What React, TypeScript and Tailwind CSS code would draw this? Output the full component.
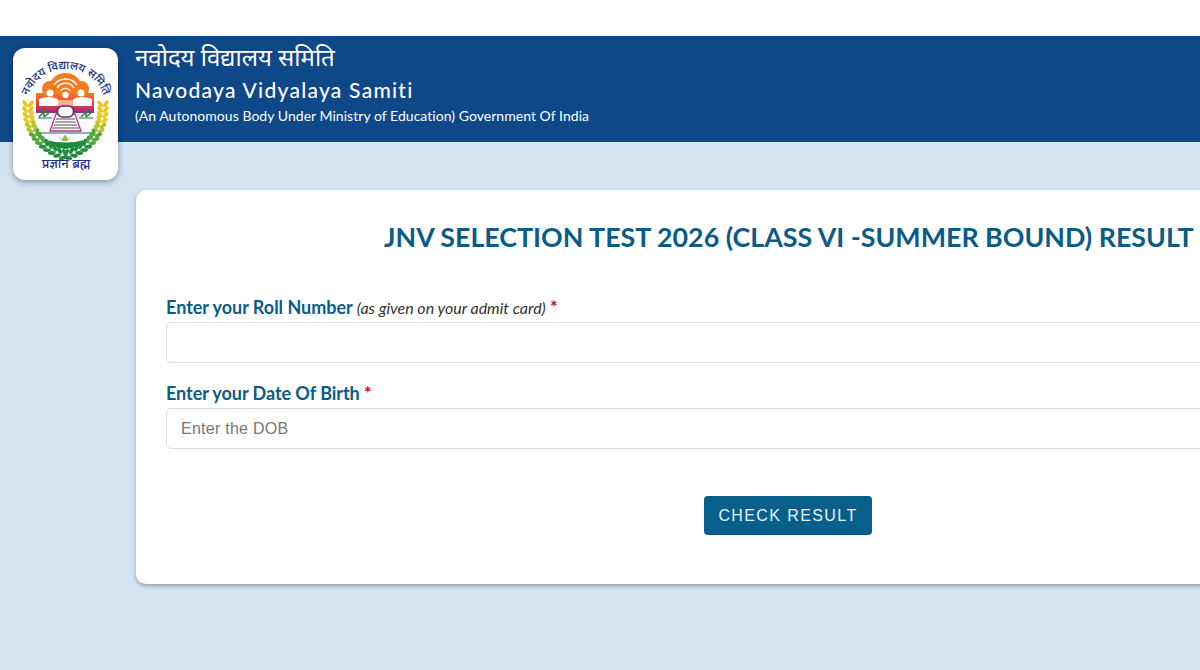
import React from 'react';

// wheat sprigs of the wreath, laid along one curve and mirrored for the right side
const wreathLeaves = Array.from({ length: 14 }, (_, i) => {
    const t = i / 13;
    const x = (1 - t) * (1 - t) * 15 + 2 * t * (1 - t) * 13 + t * t * 50;
    const y = (1 - t) * (1 - t) * 55 + 2 * t * (1 - t) * 93 + t * t * 107;
    const dx = 2 * (1 - t) * (13 - 15) + 2 * t * (50 - 13);
    const dy = 2 * (1 - t) * (93 - 55) + 2 * t * (107 - 93);
    const angle = (Math.atan2(dy, dx) * 180) / Math.PI;
    const color = i < 4 ? '#e8c81f' : i < 6 ? '#b6c42c' : i < 9 ? '#4fa83a' : '#1f8f3c';
    return { x, y, angle, color };
});

const Wreath = () => (
    <g>
        {wreathLeaves.map((l, i) => (
            <g key={i} transform={`translate(${l.x} ${l.y}) rotate(${l.angle})`}>
                <ellipse cx="-1" cy="-2.8" rx="3.9" ry="1.9" transform="rotate(35)" fill={l.color} />
                <ellipse cx="-1" cy="2.8" rx="3.9" ry="1.9" transform="rotate(-35)" fill={l.color} />
            </g>
        ))}
    </g>
);

const Logo = () => (
    <svg viewBox="0 0 105 132" className="w-[105px] h-[132px]">
        <defs>
            <linearGradient id="jnvBand" x1="0" y1="0" x2="0" y2="1">
                <stop offset="0" stopColor="#f47b20" />
                <stop offset="0.5" stopColor="#e9472e" />
                <stop offset="1" stopColor="#97278f" />
            </linearGradient>
            <path id="jnvArc" d="M13 61 A40 40 0 0 1 93 61" />
        </defs>
        <text fontSize="11.5" fill="#1d3280" fontFamily="'Noto Sans Devanagari', 'Noto Sans', sans-serif" fontWeight="500">
            <textPath href="#jnvArc" startOffset="50%" textAnchor="middle">नवोदय विद्यालय समिति</textPath>
        </text>
        {/* dome and the three heads */}
        <circle cx="52.5" cy="42" r="17" fill="#f47b20" />
        <circle cx="37" cy="41" r="8" fill="#f47b20" />
        <circle cx="68" cy="41" r="8" fill="#f47b20" />
        <path d="M41 37 A14 14 0 0 1 64 37 M44 40 A10 10 0 0 1 61 40 M47.5 43 A6 6 0 0 1 57.5 43" fill="none" stroke="#fff" strokeWidth="1.3" />
        <rect x="23" y="45" width="58" height="20" fill="url(#jnvBand)" />
        <circle cx="37" cy="45" r="3.6" fill="#fff" />
        <circle cx="52.5" cy="47" r="3.2" fill="#fff" />
        <circle cx="68" cy="45" r="3.6" fill="#fff" />
        <path d="M26 58 V51 Q36 47 45 51 V58 Z" fill="#fff" />
        <path d="M79 58 V51 Q69 47 60 51 V58 Z" fill="#fff" />
        <path d="M45 52 H60 V58 H45 Z" fill="#f2b48c" />
        {/* open book with the lamp on top */}
        <path d="M37 83 L43 66 H62 L68 83 Z" fill="#fff" stroke="#b2308f" strokeWidth="1.3" />
        <rect x="44.5" y="58" width="16" height="11" rx="5" fill="#fff" stroke="#5a2a85" strokeWidth="1.6" />
        <path d="M43 71 H62 M42 74 H63 M41 77 H64 M39 80 H66" stroke="#3b3b3b" strokeWidth="0.9" />
        {/* ground lines and grass */}
        <path d="M25 70 H39 M66 70 H80 M25 85 H80" stroke="#2b5a6e" strokeWidth="1" />
        <path d="M26 69 L31 64 M31 69 L31 62 M31 69 L37 64 M68 69 L73 64 M73 69 L73 62 M73 69 L79 64" stroke="#2e8b3d" strokeWidth="1.6" />
        {/* lotus base */}
        <path d="M33 92 Q52 97 72 92 Q66 100 52 101 Q39 100 33 92 Z" fill="#1c8a3a" />
        <path d="M52 87 L49 92 L52 93 L55 92 Z M46 89 L50 93 M58 89 L54 93" fill="#8fbd3a" stroke="#8fbd3a" strokeWidth="0.8" />
        <Wreath />
        <g transform="matrix(-1 0 0 1 105 0)">
            <Wreath />
        </g>
        <text x="53" y="120" textAnchor="middle" fontSize="13" fill="#1d3280" fontFamily="'Noto Sans Devanagari', 'Noto Sans', sans-serif" fontWeight="500">
            प्रज्ञानं ब्रह्म
        </text>
    </svg>
);

const App: React.FC = () => {
    return (
        <div className="h-[670px] w-[1200px] overflow-hidden bg-[#d4e4f3] font-['Lato',sans-serif]">
            <div className="h-9 bg-white" />
            <header className="h-[106px] bg-[#0e4889] pl-[135px] pt-[8px] text-white">
                <div className="font-['Noto_Sans_Devanagari','Noto_Sans',sans-serif] text-[24px] leading-[32px]">नवोदय विद्यालय समिति</div>
                <div className="text-[21px] leading-[28px] font-medium tracking-[1.25px]">Navodaya Vidyalaya Samiti</div>
                <div className="text-[14px] leading-[24px] tracking-[0.04px]">(An Autonomous Body Under Ministry of Education) Government Of India</div>
            </header>
            <div className="absolute left-[13px] top-[48px] flex h-[132px] w-[105px] items-center justify-center rounded-[12px] bg-white shadow-[0_2px_6px_rgba(0,0,0,0.35)]">
                <Logo />
            </div>
            <main className="ml-[136px] mt-[48px] h-[394px] w-[1100px] rounded-l-[10px] bg-white pl-[30px] pt-[27px] shadow-[0_2px_4px_rgba(0,0,0,0.3)]">
                <h1 className="pl-[218px] text-[26.8px] leading-[40px] font-bold whitespace-nowrap text-[#0b5b87]">JNV SELECTION TEST 2026 (CLASS VI -SUMMER BOUND) RESULT</h1>
                <form className="mt-[38px]">
                    <label className="block h-[24px] text-[18px] leading-[24px] font-bold tracking-[-0.02px] text-[#0b5b87]">
                        Enter your Roll Number <em className="text-[16px] font-normal text-[#333]">(as given on your admit card)</em> <span className="text-[18px] text-[#e3001b]">*</span>
                    </label>
                    <input className="mt-[3px] block h-[41px] w-full rounded-[5px] border border-[#dcdcdc] bg-white px-[14px]" />
                    <label className="mt-[18px] block h-[24px] text-[18px] leading-[24px] font-bold tracking-[-0.05px] text-[#0b5b87]">
                        Enter your Date Of Birth <span className="text-[18px] text-[#e3001b]">*</span>
                    </label>
                    <input
                        placeholder="Enter the DOB"
                        className="mt-[3px] block h-[41px] w-full rounded-[5px] border border-[#dcdcdc] bg-white px-[14px] font-['Liberation_Sans',sans-serif] text-[16px] tracking-[0.25px] placeholder:text-[#777]"
                    />
                    <button
                        type="button"
                        className="mt-[47px] ml-[538px] block h-[39px] w-[168px] rounded-[4px] bg-[#085f8a] font-['Liberation_Sans',sans-serif] text-[16px] tracking-[1.4px] text-[#e8f4fa]"
                    >
                        CHECK RESULT
                    </button>
                </form>
            </main>
        </div>
    );
};

export default App;
